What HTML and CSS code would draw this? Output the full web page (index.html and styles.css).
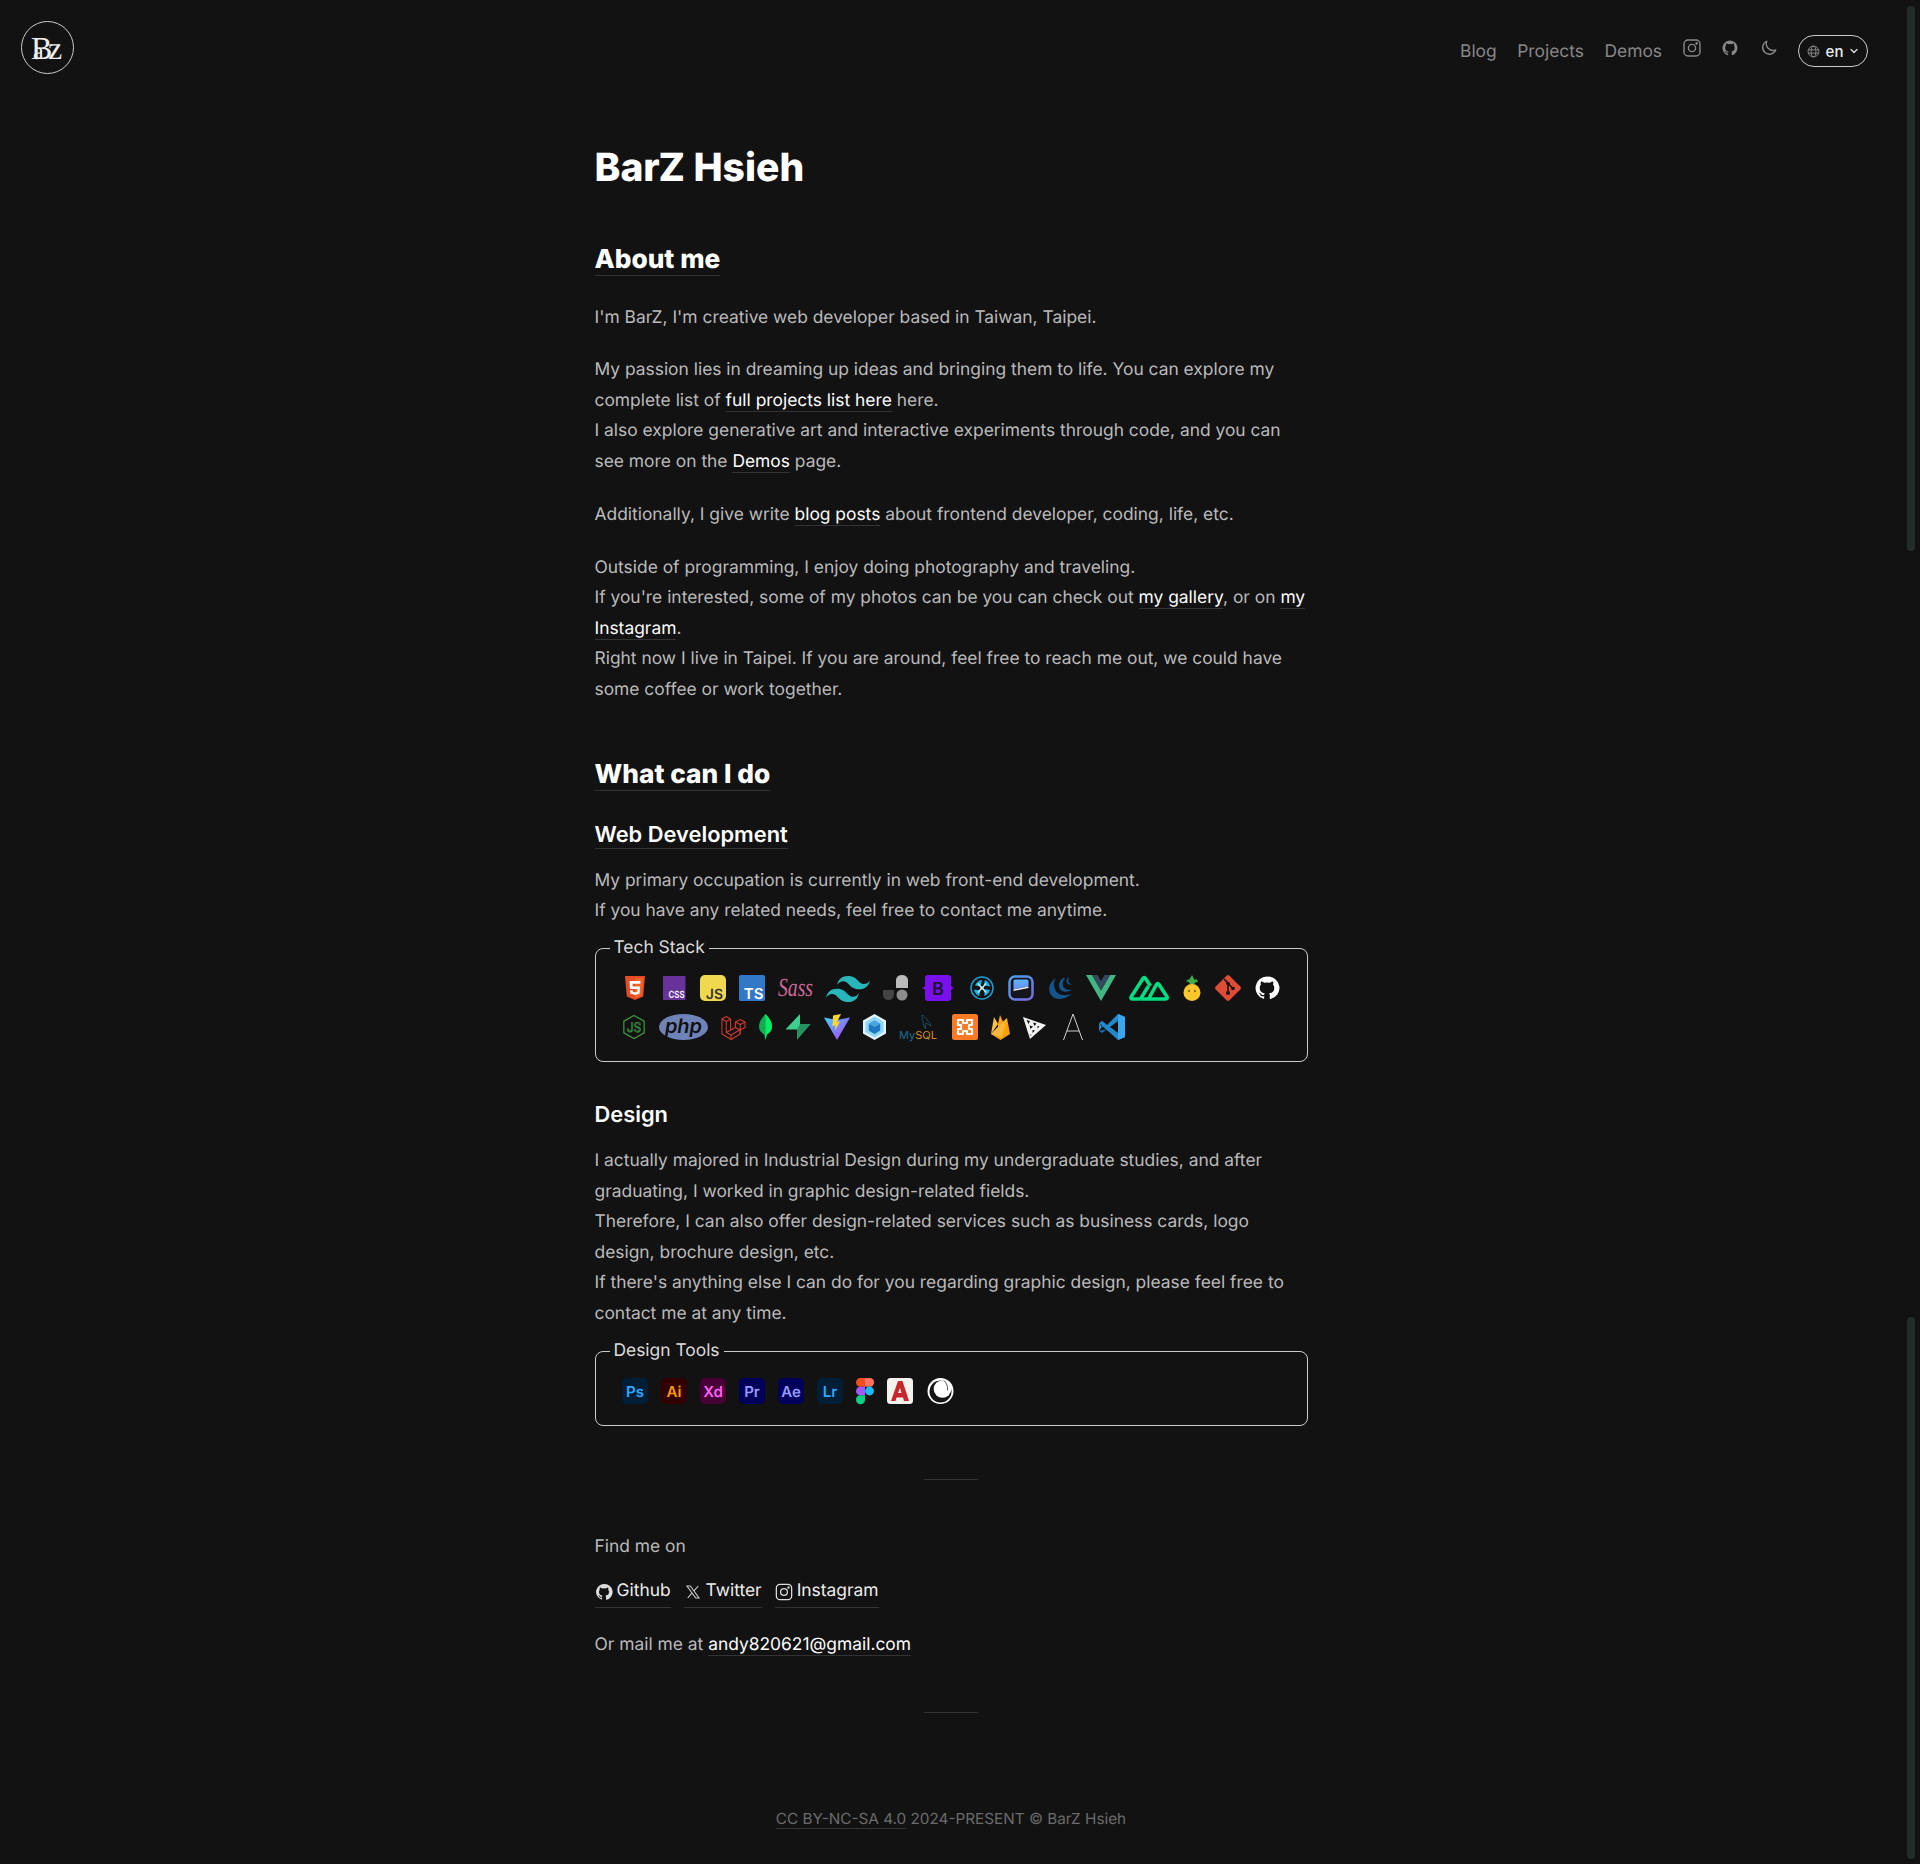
FILE: index.html
```html
<!DOCTYPE html>
<html lang="en">
<head>
  <meta charset="UTF-8" />
  <title>BarZ Hsieh</title>
  <link rel="stylesheet" href="styles.css">
</head>
<body>

<header class="nav">
  <a class="logo" href="#">
    <svg width="53" height="53" viewBox="0 0 53 53"><text class="logo-b" x="10" y="38">B</text><text class="logo-a" x="12" y="38">a</text><text class="logo-z" x="27" y="38">z</text></svg>
  </a>
  <nav class="nav-links">
    <a href="#">Blog</a>
    <a href="#">Projects</a>
    <a href="#">Demos</a>
    <a class="nav-icon" href="#">
      <svg width="18" height="18" viewBox="0 0 18 18" fill="none" stroke="currentColor" stroke-width="1.400"><rect x="1" y="1" width="16" height="16" rx="4"/><circle cx="9" cy="9" r="3.600"/><circle cx="13.600" cy="4.400" r=".6" fill="currentColor"/></svg>
    </a>
    <a class="nav-icon" href="#">
      <svg width="18" height="18" viewBox="0 0 24 24" fill="currentColor"><path d="M12 2a10 10 0 0 0-3.200 19.500c.5.100.7-.2.7-.5v-1.900c-2.800.6-3.400-1.200-3.400-1.200-.5-1.100-1.100-1.400-1.100-1.400-.9-.6.100-.6.100-.6 1 .1 1.500 1 1.500 1 .9 1.500 2.300 1.100 2.900.8.100-.6.300-1.100.6-1.300-2.200-.3-4.500-1.100-4.500-4.900 0-1.100.4-2 1-2.700-.1-.3-.4-1.300.1-2.700 0 0 .8-.3 2.700 1a9.400 9.400 0 0 1 5 0c1.900-1.300 2.700-1 2.700-1 .5 1.400.2 2.400.1 2.700.6.7 1 1.600 1 2.700 0 3.800-2.300 4.600-4.500 4.900.4.300.7.900.7 1.900V21c0 .3.200.6.7.5A10 10 0 0 0 12 2z"/></svg>
    </a>
    <a class="nav-icon" href="#">
      <svg width="18" height="18" viewBox="0 0 24 24" fill="none" stroke="currentColor" stroke-width="1.800" stroke-linecap="round" stroke-linejoin="round"><path d="M9 3a9 9 0 1 0 12 11.500A9 9 0 0 1 9 3z"/></svg>
    </a>
    <button class="lang">
      <svg width="13" height="13" viewBox="0 0 24 24" fill="none" stroke="#999" stroke-width="1.600"><circle cx="12" cy="12" r="10"/><ellipse cx="12" cy="12" rx="4.500" ry="10"/><path d="M2.500 9h19M2.500 15h19"/></svg>
      <span>en</span>
      <svg width="10" height="10" viewBox="0 0 10 10" fill="none" stroke="#ddd" stroke-width="1.300" stroke-linecap="round" stroke-linejoin="round"><path d="M2 3.500 5 6.500l3-3"/></svg>
    </button>
  </nav>
</header>

<main class="prose">
  <h1>BarZ Hsieh</h1>

  <h2 class="first"><span class="ul">About me</span></h2>
  <p>I'm BarZ, I'm creative web developer based in Taiwan, Taipei.</p>
  <p>My passion lies in dreaming up ideas and bringing them to life. You can explore my complete list of <a href="#">full projects list here</a> here.<br>
  I also explore generative art and interactive experiments through code, and you can see more on the <a href="#">Demos</a> page.</p>
  <p>Additionally, I give write <a href="#">blog posts</a> about frontend developer, coding, life, etc.</p>
  <p>Outside of programming, I enjoy doing photography and traveling.<br>
  If you're interested, some of my photos can be you can check out <a href="#">my gallery</a>, or on <a href="#">my Instagram</a>.<br>
  Right now I live in Taipei. If you are around, feel free to reach me out, we could have some coffee or work together.</p>

  <h2><span class="ul">What can I do</span></h2>
  <h3><span class="ul">Web Development</span></h3>
  <p class="tight">My primary occupation is currently in web front-end development.<br>
  If you have any related needs, feel free to contact me anytime.</p>

  <fieldset class="stack">
    <legend>Tech Stack</legend>
    <div class="icons">
      <svg width="26" height="26" viewBox="0 0 26 26"><path d="M3 1h20l-1.800 20.500L13 25l-8.200-3.500z" fill="#e44d26"/><path d="M13 3v20l6.500-2.800L21 3z" fill="#f16529"/><path d="M7.500 6h11l-.2 2.700H10.500l.2 2.800h7.400l-.6 7L13 20l-4.600-1.500-.3-3.300h2.500l.2 1.600 2.200.6 2.300-.6.2-2.700H8z" fill="#fff"/></svg>
      <svg width="26" height="26" viewBox="0 0 26 26"><path d="M2 1h21.500a1 1 0 0 1 1 1v22a1 1 0 0 1-1 1H3a1 1 0 0 1-1-1z" fill="#663399"/><text class="t" x="23.500" y="22.500" text-anchor="end" font-size="10" textLength="16" lengthAdjust="spacingAndGlyphs" fill="#fff">CSS</text></svg>
      <svg width="26" height="26" viewBox="0 0 26 26"><rect width="26" height="26" rx="5" fill="#f1d94f"/><text class="t" x="23" y="23.500" text-anchor="end" font-size="14" fill="#333">JS</text></svg>
      <svg width="26" height="26" viewBox="0 0 26 26"><rect width="26" height="26" rx="1.500" fill="#3178c6"/><text class="t" x="24.500" y="23.500" text-anchor="end" font-size="15" fill="#fff">TS</text></svg>
      <svg width="35" height="26" viewBox="0 0 35 26"><text class="sass" x="0" y="21" textLength="35" lengthAdjust="spacingAndGlyphs">Sass</text></svg>
      <svg width="44" height="26" viewBox="0 0 44 26" fill="#28b6ba"><path d="M22 1c-5.900 0-9.500 2.900-11 8.800 2.200-2.900 4.800-4 7.700-3.300 1.700.4 2.900 1.600 4.200 3 2.200 2.200 4.700 4.800 10.100 4.800 5.900 0 9.500-2.900 11-8.800-2.200 2.900-4.800 4-7.700 3.300-1.700-.4-2.900-1.600-4.200-3C30 3.600 27.400 1 22 1z"/><path d="M11 13.700c-5.900 0-9.500 2.900-11 8.800 2.200-2.900 4.800-4 7.700-3.300 1.700.4 2.900 1.600 4.200 3 2.200 2.200 4.700 4.800 10.100 4.800 5.900 0 9.500-2.900 11-8.800-2.200 2.900-4.800 4-7.700 3.300-1.700-.4-2.900-1.600-4.200-3-2.100-2.200-4.700-4.800-10.100-4.800z"/></svg>
      <svg width="25" height="26" viewBox="0 0 25 26"><path d="M0 15h11v4.500a5.500 5.500 0 0 1-11 0z" fill="#444"/><path d="M13 5a6 5 0 0 1 12 0v8H13z" fill="#bbb"/><circle cx="19" cy="20" r="5.500" fill="#8d8d8d"/></svg>
      <svg width="34" height="26" viewBox="0 0 34 26"><path d="M7 0h20a3 3 0 0 1 3 3v7c0 2 2 3 4 3-2 0-4 1-4 3v7a3 3 0 0 1-3 3H7a3 3 0 0 1-3-3v-7c0-2-2-3-4-3 2 0 4-1 4-3V3a3 3 0 0 1 3-3z" fill="#7a10ee"/><text class="t" x="17" y="19.500" text-anchor="middle" font-size="18" fill="#1c1530" font-weight="500">B</text></svg>
      <svg width="26" height="26" viewBox="0 0 26 26" fill="none"><circle cx="13" cy="13" r="11" stroke="#1f9bd1" stroke-width="1.500"/><path d="M13 5c-3 .3-6 2.500-7 5.500l5.500 1zM21 11.500c-.5-3-2.500-5.500-5-6.500l-1.500 5.500zM15.500 21c2.500-1 4.500-3 5.500-6l-5.500-1zM5 14.500c.5 3 2.500 5.500 5 6.500l1.500-5.500z" fill="#19b1e8"/><path d="M9 8.500l3 3.500M17 8.500l-3 3.500M17 17.500l-3-3.500M9 17.500l3-3.500" stroke="#cfeefa" stroke-width="1.200"/><circle cx="13" cy="13" r="1.800" fill="#cfeefa"/></svg>
      <svg width="26" height="26" viewBox="0 0 26 26"><defs><linearGradient id="win" x1="0" y1="0" x2="1" y2="1"><stop offset="0" stop-color="#4aa3f0"/><stop offset="1" stop-color="#7b6be0"/></linearGradient><linearGradient id="win2" x1="0" y1="0" x2="0" y2="1"><stop offset="0" stop-color="#5cb6ff"/><stop offset="1" stop-color="#6a8cf0"/></linearGradient></defs><rect x="1.500" y="1.500" width="23" height="23" rx="5.500" fill="#15151c" stroke="url(#win)" stroke-width="2.500"/><path d="M5.500 6a1.500 1.500 0 0 1 1.500-1.500h12A1.500 1.500 0 0 1 20.500 6v5.500L5.500 14.500z" fill="url(#win2)"/><path d="M5.500 14.500l15-3v1.500l-15 3z" fill="#f0f0f5"/></svg>
      <svg width="26" height="26" viewBox="0 0 26 26"><path d="M9 3C1 8 0 17 6 22c4 3 11 3 19-3-6 2-15 2-17-5-2-5-1-8 1-11z" fill="#14568c"/><path d="M16 3c-4 3-5 8-3 11 3 4 8 3 12 1-4 0-8-.5-9-4-.7-3 0-6 2-8z" fill="#14568c"/><path d="M22 2c-3 2-3 5-1.500 6.500 1 1 3 1.500 5 .5-2 0-3.500-.5-4-2-.5-1.500 0-3.500.5-5z" fill="#14568c"/></svg>
      <svg width="30" height="26" viewBox="0 0 30 26"><path d="M0 0h6l9 15.500L24 0h6L15 26z" fill="#41b883"/><path d="M6 0h5.500L15 6l3.500-6H24l-9 15.500z" fill="#34495e"/></svg>
      <svg width="40" height="26" viewBox="0 0 40 26" fill="none" stroke="#00dc82" stroke-width="3.600" stroke-linejoin="round"><path d="M11.500 24H3.500c-1.500 0-2-1-1.300-2.200L14 3.500c.8-1.300 1.800-1.300 2.500 0L21.500 11"/><path d="M11.500 24h25c1.500 0 2.200-1 1.500-2.200L30 9.500c-.8-1.300-1.700-1.300-2.500 0L19.500 24"/><path d="M11.500 24l8-13"/></svg>
      <svg width="20" height="26" viewBox="-1 0 20 26"><path d="M9 11 5 6.500 3 7l2-3 1 1 3-5 2.500 5 2-1 1.500 3h-2z" fill="#3fae49"/><ellipse cx="9" cy="17.500" rx="8.500" ry="8.500" fill="#fcc72b"/><circle cx="6" cy="16" r=".9" fill="#5a4a1c"/><circle cx="12" cy="16" r=".9" fill="#5a4a1c"/></svg>
      <svg width="26" height="26" viewBox="0 0 26 26"><path d="M11.500 .7.700 11.500a2.100 2.100 0 0 0 0 3l10.800 10.800a2.100 2.100 0 0 0 3 0l10.800-10.800a2.100 2.100 0 0 0 0-3L14.500.7a2.100 2.100 0 0 0-3 0z" fill="#de4c36"/><path d="M9 4l4 4v8.500M13 8.500l5 5" fill="none" stroke="#111" stroke-width="1.500"/><circle cx="13" cy="8.500" r="1.800" fill="#111"/><circle cx="13" cy="18" r="2" fill="#111"/><circle cx="18" cy="13.500" r="1.800" fill="#111"/></svg>
      <svg width="26" height="26" viewBox="0 0 24 24" fill="#fff"><path d="M12 1.500a10.500 10.500 0 0 0-3.300 20.500c.5.100.7-.2.7-.5v-1.900c-2.900.6-3.500-1.200-3.500-1.200-.5-1.200-1.200-1.500-1.200-1.500-.9-.6.100-.6.100-.6 1.100.1 1.600 1.100 1.600 1.100.9 1.600 2.400 1.100 3 .9.100-.7.400-1.100.7-1.400-2.300-.3-4.800-1.200-4.800-5.200 0-1.100.4-2.100 1.100-2.800-.1-.3-.5-1.400.1-2.800 0 0 .9-.3 2.900 1.100a10 10 0 0 1 5.200 0c2-1.400 2.900-1.100 2.900-1.100.6 1.400.2 2.500.1 2.800.7.700 1.100 1.700 1.100 2.800 0 4-2.500 4.900-4.800 5.200.4.300.7 1 .7 1.900v2.900c0 .3.200.6.700.5A10.500 10.500 0 0 0 12 1.500z"/></svg>

      <svg width="24" height="26" viewBox="0 0 26 26" preserveAspectRatio="none" fill="none" stroke="#3f9a41" stroke-width="1.300"><path d="M13 1.500 24 7.200v11.600L13 24.500 2 18.800V7.200z"/><text class="node" x="13" y="18" text-anchor="middle">JS</text></svg>
      <svg width="49" height="26" viewBox="0 0 49 26"><ellipse cx="24.500" cy="13" rx="24.500" ry="13" fill="#6f83b8"/><text x="24.500" y="18.500" text-anchor="middle" font-size="20" font-weight="700" font-style="italic" fill="#111" class="t">php</text></svg>
      <svg width="25" height="26" viewBox="0 0 26 26" preserveAspectRatio="none" fill="none" stroke="#d23b2f" stroke-width="1.100" stroke-linejoin="round"><path d="M1 5V20L10.500 25.500 20 20V15.500L10.500 21 5.500 18.500V7.500z"/><path d="M1 5 5.500 2.500 10 5 5.500 7.500M10 5V16L5.500 18.500M10.500 21V25.500"/><path d="M10 16 15 13.500V8L20 5.500 25 8V13.500L20 16M15 8 20 10.500 25 8M20 10.500V16M15 13.500 20 16V20"/></svg>
      <svg width="13" height="26" viewBox="0 0 14 26" preserveAspectRatio="none"><path d="M7 0c4 4 7 8 7 12.500 0 4-3 6.500-5.500 8L7 26l-1.500-5.500C3 19 0 16.500 0 12.500 0 8 3 4 7 0z" fill="#13aa52"/><path d="M7 0c4 4 7 8 7 12.500 0 4-3 6.500-5.500 8L7 26z" fill="#00ed64"/></svg>
      <svg width="26" height="26" viewBox="0 0 26 26"><path d="M15 0v10h10.500L12 25.500v-10H.5z" fill="#3ecf8e"/><path d="M15 10h10.500L12 25.500V15.500z" fill="#249361"/></svg>
      <svg width="26" height="26" viewBox="0 0 26 26"><defs><linearGradient id="vite" x1="0" y1="0" x2="1" y2="1"><stop offset="0" stop-color="#41d1ff"/><stop offset="1" stop-color="#bd34fe"/></linearGradient></defs><path d="M0 3.500 13 6l13-2.500L13 26z" fill="url(#vite)"/><path d="M17 0 9 1.500 8.500 12l3-.5-.5 5 5-9-3 .5z" fill="#ffd62e"/></svg>
      <svg width="23" height="26" viewBox="0 0 24 26" preserveAspectRatio="none"><path d="M12 0 24 6.500v13L12 26 0 19.500v-13z" fill="#e4f3fb"/><path d="M12 2.500 21.500 8v10L12 23.500 2.500 18V8z" fill="#8ed6fb"/><path d="M12 6.500 18 10v6.500L12 20l-6-3.500V10z" fill="#1c78c0"/><path d="M12 13 18 10l-6-3.500L6 10z" fill="#4ba5e0"/></svg>
      <svg width="39" height="26" viewBox="0 0 39 26"><path d="M23 1c2 1 4 3 5 5 1 1 3 3 4 6-2-1-3-2-5-3-1 2-1 4 0 6-2-2-3-5-3-8-1-2-1-4-1-6z" fill="none" stroke="#1f5a78" stroke-width=".8"/><text class="mysql" x="0" y="24.500">My<tspan class="m2">SQL</tspan></text></svg>
      <svg width="26" height="26" viewBox="0 0 26 26"><rect width="26" height="26" rx="2.500" fill="#fb7a24"/><path d="M6 6h5v3h4V6h5v5h-3v4h3v5h-5v-3h-4v3H6v-5h3v-4H6z" fill="none" stroke="#fff" stroke-width="2.200" stroke-linejoin="round"/></svg>
      <svg width="19" height="26" viewBox="0 0 19 26"><path d="M0 20 3 3l4 7z" fill="#ffc24a"/><path d="M7 10 9 1l4 9-6 6z" fill="#ffa712"/><path d="M0 20 16 4l3 16-9.500 6z" fill="#ffa000"/><path d="M0 20l16-16-5 20z" fill="#f6b73c"/></svg>
      <svg width="27" height="26" viewBox="0 0 27 26"><path d="M0 3 23 11 7 25z" fill="#f2f2f2"/><path d="M3.500 6l3.500 1-1.500 3zM10 8.500l3.500 1-2 2.500zM6.500 11.500l3.500 1-2.500 2.500zM14.500 12l2 .5-2 2zM9.500 16l2.500.5-2.500 2.500zM7.500 20l1 1-1 1z" fill="#111"/></svg>
      <svg width="23" height="26" viewBox="0 0 23 26" fill="none" stroke="#e6e6e6" stroke-width=".9"><path d="M.5 26 10 0l9.500 26M4 17h12"/></svg>
      <svg width="26" height="26" viewBox="0 0 26 26"><path d="M19 0 26 3v20l-7 3L0 9 3 7l5 4z" fill="#2489ca"/><path d="M0 17l3 2 5-4 11 11 7-3v-1L19 26 8 15z" fill="#1070b3"/><path d="M19 0 26 3v20l-7 3z" fill="#3ba6ee"/><path d="M19 7v12l-8-6z" fill="#111"/><path d="M3 7l5 4-5 2zM0 9l3 4-3 4z" fill="#2489ca"/></svg>
    </div>
  </fieldset>

  <h3 class="gap"><span>Design</span></h3>
  <p class="tight">I actually majored in Industrial Design during my undergraduate studies, and after graduating, I worked in graphic design-related fields.<br>
  Therefore, I can also offer design-related services such as business cards, logo design, brochure design, etc.<br>
  If there's anything else I can do for you regarding graphic design, please feel free to contact me at any time.</p>

  <fieldset class="stack">
    <legend>Design Tools</legend>
    <div class="icons">
      <svg width="26" height="26" viewBox="0 0 26 26"><rect width="26" height="26" rx="5" fill="#001e36"/><text class="t" x="13" y="18.500" text-anchor="middle" font-size="15" fill="#31a8ff">Ps</text></svg>
      <svg width="26" height="26" viewBox="0 0 26 26"><rect width="26" height="26" rx="5" fill="#330000"/><text class="t" x="13" y="18.500" text-anchor="middle" font-size="15" fill="#ff9a00">Ai</text></svg>
      <svg width="26" height="26" viewBox="0 0 26 26"><rect width="26" height="26" rx="5" fill="#470137"/><text class="t" x="13" y="18.500" text-anchor="middle" font-size="15" fill="#ff61f6">Xd</text></svg>
      <svg width="26" height="26" viewBox="0 0 26 26"><rect width="26" height="26" rx="5" fill="#00005b"/><text class="t" x="13" y="18.500" text-anchor="middle" font-size="15" fill="#9999ff">Pr</text></svg>
      <svg width="26" height="26" viewBox="0 0 26 26"><rect width="26" height="26" rx="5" fill="#00005b"/><text class="t" x="13" y="18.500" text-anchor="middle" font-size="15" fill="#9999ff">Ae</text></svg>
      <svg width="26" height="26" viewBox="0 0 26 26"><rect width="26" height="26" rx="5" fill="#001e36"/><text class="t" x="13" y="18.500" text-anchor="middle" font-size="15" fill="#31a8ff">Lr</text></svg>
      <svg width="18" height="26" viewBox="0 0 18 26"><path d="M0 4.300A4.300 4.300 0 0 1 4.300 0H9v8.700H4.300A4.300 4.300 0 0 1 0 4.300z" fill="#f24e1e"/><path d="M9 0h4.700a4.300 4.300 0 0 1 0 8.700H9z" fill="#ff7262"/><path d="M0 13a4.300 4.300 0 0 1 4.300-4.300H9v8.600H4.300A4.300 4.300 0 0 1 0 13z" fill="#a259ff"/><circle cx="13.500" cy="13" r="4.400" fill="#1abcfe"/><path d="M0 21.700a4.300 4.300 0 0 1 4.300-4.400H9v4.400a4.400 4.400 0 0 1-9 0z" fill="#0acf83"/></svg>
      <svg width="26" height="26" viewBox="0 0 26 26"><rect width="26" height="26" rx="3.500" fill="#f5f1ec"/><path d="M4 23 11 3h4.500L22 23h-5l-1-3.500h-6.500L8.500 23z" fill="#c6272e"/><path d="M11 15h3.500l-1.500-5z" fill="#f5f1ec"/></svg>
      <svg width="27" height="26" viewBox="0 0 27 26"><circle cx="13.500" cy="13" r="13" fill="#fff"/><circle cx="13.500" cy="13.500" r="11" fill="#151515"/><circle cx="15.500" cy="11" r="8.800" fill="#fff"/><path d="M17 2.500c2.500 2.500 4 6 3.500 10" fill="none" stroke="#151515" stroke-width=".7"/></svg>
    </div>
  </fieldset>

  <hr>

  <p class="find">Find me on</p>
  <div class="socials">
    <a href="#"><svg width="18" height="18" viewBox="0 0 24 24" fill="#ddd"><path d="M12 1.500a10.500 10.500 0 0 0-3.300 20.500c.5.100.7-.2.7-.5v-1.900c-2.900.6-3.500-1.200-3.500-1.200-.5-1.200-1.200-1.500-1.200-1.500-.9-.6.100-.6.100-.6 1.100.1 1.600 1.100 1.600 1.100.9 1.600 2.400 1.100 3 .9.100-.7.400-1.100.7-1.400-2.300-.3-4.800-1.200-4.800-5.200 0-1.100.4-2.100 1.100-2.800-.1-.3-.5-1.400.1-2.800 0 0 .9-.3 2.900 1.100a10 10 0 0 1 5.200 0c2-1.400 2.900-1.100 2.900-1.100.6 1.400.2 2.500.1 2.800.7.700 1.100 1.700 1.100 2.800 0 4-2.500 4.900-4.800 5.200.4.300.7 1 .7 1.900v2.900c0 .3.200.6.700.5A10.500 10.500 0 0 0 12 1.500z"/></svg>Github</a>
    <a href="#"><svg width="18" height="18" viewBox="0 0 24 24" fill="none" stroke="#ccc" stroke-width="1.500"><path d="M4 4h4.500L20 20h-4.500zM19 4l-6 6.800M10.500 13.500 5 20"/></svg>Twitter</a>
    <a href="#"><svg width="18" height="18" viewBox="0 0 20 20" fill="none" stroke="#ddd" stroke-width="1.400"><rect x="1.500" y="1.500" width="17" height="17" rx="4"/><circle cx="10" cy="10" r="3.800"/><circle cx="15" cy="5" r=".6" fill="#ddd"/></svg>Instagram</a>
  </div>
  <p class="mail">Or mail me at <a href="#">andy820621@gmail.com</a></p>

  <hr class="hr-end">

  <footer><a href="#">CC BY-NC-SA 4.0</a> 2024-PRESENT © BarZ Hsieh</footer>
</main>

<div class="scroll-thumb top"></div>
<div class="scroll-thumb bottom"></div>

</body>
</html>
```

FILE: styles.css
```css
* { box-sizing: border-box; margin: 0; padding: 0; }

html, body { height: 100%; overflow: hidden; }

body {
  background: #121212;
  color: #bbb;
  font-family: Inter, "Liberation Sans", sans-serif;
  font-size: 17.400px;
  line-height: 30.600px;
  padding-right: 18px;
  text-rendering: geometricPrecision;
}

a { color: inherit; text-decoration: none; }

.nav {
  display: flex;
  justify-content: space-between;
  align-items: flex-start;
  padding: 21px 34px 0 21px;
  height: 132px;
}

.logo {
  display: block;
  width: 53px;
  height: 53px;
  border: 1.5px solid #ccc;
  border-radius: 50%;
}

.logo svg { margin: -1.5px; display: block; }

.logo-b, .logo-a, .logo-z {
  font-family: "Liberation Serif", serif;
  fill: #eee;
}

.logo-b { font-size: 32px; }
.logo-a { font-size: 24px; }
.logo-z { font-size: 32px; }

.nav-links {
  display: flex;
  align-items: center;
  gap: 20.500px;
  padding-top: 15px;
  color: #888;
  line-height: 1;
}

.nav-icon { display: block; height: 18px; margin-top: -7px; }

.lang {
  display: flex;
  align-items: center;
  gap: 6px;
  height: 32px;
  width: 70px;
  margin-top: -1px;
  justify-content: center;
  background: transparent;
  color: #eee;
  border: 1px solid #ccc;
  border-radius: 16px;
  font: 500 15px Inter, sans-serif;
}

.prose {
  width: 713px;
  margin: 0 auto;
}

h1 {
  font-size: 39px;
  font-weight: 800;
  line-height: 1.1;
  color: #fff;
  margin-top: 15px;
}

h2 {
  font-size: 26.250px;
  font-weight: 800;
  line-height: 1.3;
  color: #fff;
  margin: 52px 0 25.500px;
}

h2.first { margin-top: 53px; }

h2 + h3 { margin-top: -1px; }

h3 {
  font-size: 21.875px;
  font-weight: 600;
  line-height: 1.3;
  color: #fff;
  margin: 0 0 16.500px;
}

h2:has(+ h3) { margin-bottom: 30px; }

h3.gap { margin-top: 39px; }

.ul { border-bottom: 1px solid #333; }

p { margin-bottom: 22.200px; }
p.tight { margin-bottom: 0; }

p a, .mail a {
  color: #fff;
  border-bottom: 1px solid #333;
}

.stack {
  border: 1px solid #ccc;
  border-radius: 8px;
  padding: 0 17px 21px 14px;
  margin-top: 10.500px;
}

legend {
  padding: 0 4px;
  color: #ddd;
  line-height: 1.3;
}

.icons {
  display: flex;
  flex-wrap: wrap;
  gap: 13.125px;
  padding: 15px 0 0 12px;
}

.icons svg { height: 26px; display: block; overflow: visible; }

.t { font-family: Inter, sans-serif; font-weight: 600; }

.sass {
  font-family: "Liberation Serif", serif;
  font-style: italic;
  font-size: 26px;
  fill: #cd6799;
}

.node {
  font-family: Inter, sans-serif;
  font-size: 13px;
  stroke-width: .7;
}

.mysql {
  font-family: Inter, sans-serif;
  font-size: 11px;
  fill: #1b6d8f;
}

.m2 { fill: #d98a1f; }

hr {
  width: 54px;
  height: 1px;
  border: 0;
  background: #333;
  margin: 53px auto 52px;
}

.socials {
  display: flex;
  gap: 13px;
  color: #eee;
}

.find { margin: 0 0 14px; }

.socials a {
  display: flex;
  align-items: center;
  gap: 4px;
  border-bottom: 1px solid #333;
}

.mail { margin: 22.500px 0 0; }

.hr-end { margin: 51px auto 0; }

footer {
  margin-top: 91px;
  text-align: center;
  color: #6b6b6b;
  font-size: 15.300px;
}

footer a { border-bottom: 1px solid #333; }

.scroll-thumb {
  position: fixed;
  right: 5px;
  width: 8px;
  background: #222d2a;
  border-radius: 4px;
}

.scroll-thumb.top { top: 6px; height: 545px; }
.scroll-thumb.bottom { top: 1317px; height: 542px; }
```
